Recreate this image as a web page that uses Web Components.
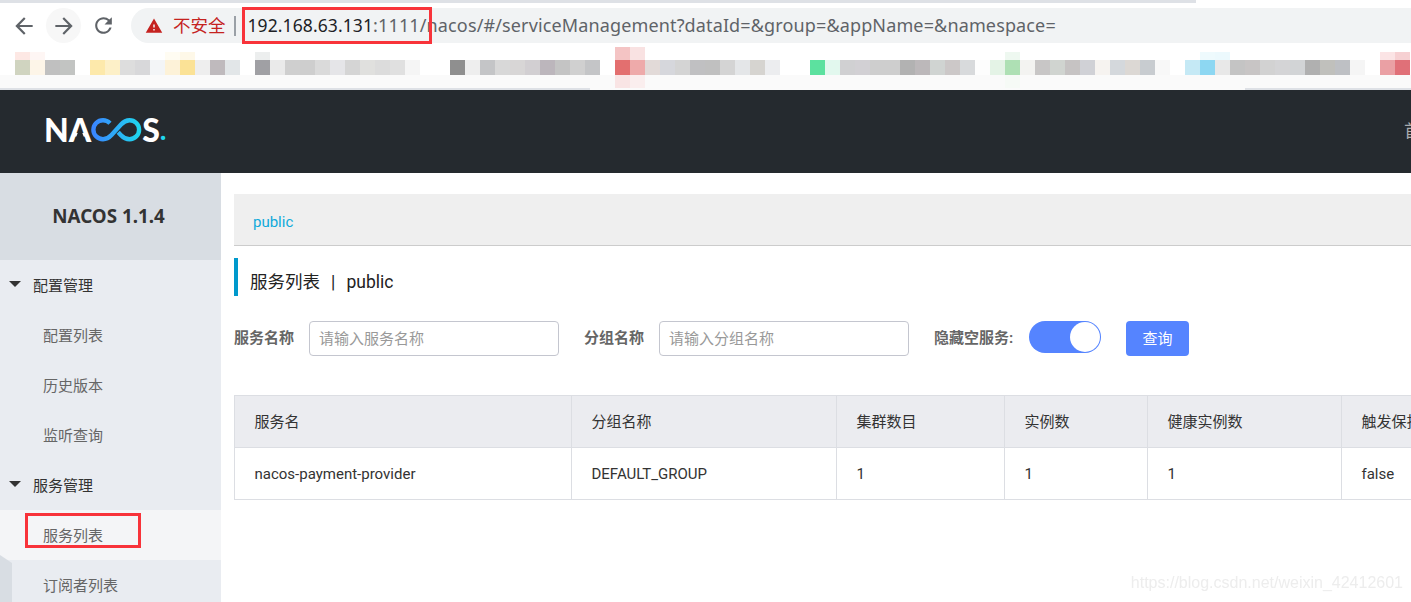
<!DOCTYPE html>
<html lang="zh"><head><meta charset="utf-8"><title>Nacos</title>
<style>
html,body{margin:0;padding:0;width:1411px;height:602px;overflow:hidden;background:#fff;font-family:"Noto Sans","Noto Sans CJK SC",sans-serif}
</style></head><body>
<browser-toolbar></browser-toolbar>
<bookmark-bar></bookmark-bar>
<nacos-header></nacos-header>
<app-shell>
  <side-nav slot="nav"></side-nav>
  <service-page slot="main"></service-page>
</app-shell>
<red-mark style="left:242px;top:7px;width:184px;height:31px"></red-mark>
<red-mark style="left:25px;top:513px;width:110px;height:29px"></red-mark>
<water-mark>https://blog.csdn.net/weixin_42412601</water-mark>
<script>
const FONT='"Noto Sans","Noto Sans CJK SC",sans-serif';
const RFONT='Roboto,"Noto Sans CJK SC",sans-serif';
function def(name,html){customElements.define(name,class extends HTMLElement{constructor(){super();this.attachShadow({mode:'open'}).innerHTML=html;}});}

def('browser-toolbar',`<style>
:host{display:block;height:47px;background:#fff;font-family:${FONT}}
.strip{height:3px;width:1196px;background:#dee1e6}
.row{display:flex;align-items:center;height:35px;margin-top:5px;padding-left:6px;gap:5px}
.btn{width:35px;height:35px;border-radius:50%;display:flex;align-items:center;justify-content:center}
.btn.hover{background:#f7f7f7}
svg{display:block;fill:#5f6368}
.pill{flex:1;margin-left:5px;height:35px;background:#f1f3f4;border-radius:18px 0 0 18px;display:flex;align-items:center;padding-left:14px;white-space:nowrap;overflow:hidden}
.warn{fill:#c5221f;margin-right:10px}
.insecure{color:#c5221f;font-size:17.5px;margin-bottom:2px}
.sep{width:2px;height:20px;background:#9aa0a6;margin:0 12px 0 8px}
.url{font-size:18px;letter-spacing:.135px;color:#5f6368;margin-bottom:2px}
.host{color:#202124;font-size:17.5px;letter-spacing:.1px}
</style>
<div class="strip"></div>
<div class="row">
<div class="btn"><svg width="26" height="26" viewBox="0 0 24 24"><path d="M20 11H7.83l5.59-5.59L12 4l-8 8 8 8 1.41-1.41L7.83 13H20v-2z"/></svg></div>
<div class="btn hover"><svg width="26" height="26" viewBox="0 0 24 24"><path d="M4 11h12.17l-5.59-5.59L12 4l8 8-8 8-1.41-1.41L16.17 13H4v-2z"/></svg></div>
<div class="btn"><svg width="25" height="25" viewBox="0 0 24 24"><path d="M17.65 6.35A7.95 7.95 0 0 0 12 4c-4.42 0-7.99 3.58-7.99 8s3.57 8 7.99 8c3.73 0 6.84-2.55 7.73-6h-2.08A5.99 5.99 0 0 1 12 18c-3.31 0-6-2.69-6-6s2.69-6 6-6c1.66 0 3.14.69 4.22 1.78L13 11h7V4l-2.35 2.35z"/></svg></div>
<div class="pill"><svg class="warn" width="18" height="18" viewBox="0 0 24 24"><path d="M1 21h22L12 2 1 21zm12-3h-2v-2h2v2zm0-4h-2v-4h2v4z"/></svg><span class="insecure">不安全</span><span class="sep"></span><span class="url"><span class="host">192.168.63.131</span>:1111/nacos/#/serviceManagement?dataId=&amp;group=&amp;appName=&amp;namespace=</span></div>
</div>`);

class BookmarkBar extends HTMLElement{constructor(){super();
const mid='d0d4c0 fdf5e8 c0c0c0 c2c4c2 fff fde9ab fdf0c8 ddd d8d8da f3f5f7 fdf2d8 fbe296 eee bfbabd e2e6e8 fff a0a0a4 eaeaea cfcfcf cecece dadada e5e5e8 d5d5d5 e0e0de dcdcdc e0e0e0 f5f5f5 fff fff 8f8f8f eee c4c5c7 d8d8d8 d8d6d6 d2cfd2 bcb6bc c4c4c4 d0d0d0 c4c5c7 fff e36f6f eeaaaa e2dad8 d6d7dc d4d4d4 c0c0c2 c0c0c0 d4d4d4 e4e6e8 d6d4d0 ecedef fff fff 5ce19f e2f8ee d0d0d2 d2d0d4 cecece cecece b2b2b2 bcb8ba d0d4d2 ccc8c8 d8dadc fdfdfd e4f3e6 aee0b4 f3f3f1 c8c6c6 d0d4d0 c6c3c3 d0d1d6 f6f3f0 d4d8dc dcd8d4 c8ccd0 f8f8f8 fff c5e9f5 8dd7f2 e8e8e8 c4c4c4 c8c5c5 d2d2d2 d4d4d6 d2d4d6 b0b0b0 c0c0bc bec0c4 f5f5f5 fff eaa0a4 e07078'.split(' ');
const top={0:'fde8e4',1:'fef6f4',10:'fffcf2',11:'fef8e8',16:'eceeee',40:'f4c4c4',41:'f9e2e2',66:'eef8f0',79:'eefafd',80:'ecf9fd',91:'fbe4e5',92:'f6d0d2'};
const bot={40:'f9e4e4',41:'faeeee',66:'f6faf6'};
const cells=mid.map((c,i)=>{const t=top[i];const st=t?`linear-gradient(transparent ${i==40||i==41?0:5}px,#${t} 0)`:'none';
return `<div class="c"><i style="background:${st}"></i><b style="background:#${c}"></b><u style="background:${bot[i]?'#'+bot[i]:'transparent'}"></u></div>`}).join('');
this.attachShadow({mode:'open'}).innerHTML=`<style>
:host{display:flex;height:43px;padding-left:15px;box-sizing:border-box;overflow:hidden;
background:linear-gradient(#dee1e6,#dee1e6) 0 100%/590px 2px no-repeat,linear-gradient(#dee1e6,#dee1e6) 100% 100%/166px 2px no-repeat,linear-gradient(#fff 28px,#fafafa 28px)}
.c{width:15px;flex:none;display:flex;flex-direction:column}
i{display:block;height:13px}b{display:block;height:15px}u{display:block;height:13px}
</style>${cells}`;}}
customElements.define('bookmark-bar',BookmarkBar);

def('nacos-header',`<style>
:host{display:flex;align-items:center;justify-content:space-between;height:83px;background:#252a2f;padding-left:44px;overflow:hidden}
.logo{display:flex;align-items:center;height:24px;color:#fff;font:900 32px/24px Lato,sans-serif;margin-top:-4px}
.a{position:relative;display:block}
.a::after{content:"";position:absolute;inset:0;background:#252a2f;clip-path:polygon(50% 38%,74% 100%,26% 100%)}
.logo svg{display:block;flex:none}
.s{margin-left:-2px}
.dot{color:#1fd6ee;font-size:26px}
.nav{width:7px;overflow:hidden;white-space:nowrap;color:#a9abad;font-size:17.5px;font-family:${FONT};margin-top:-4px}
</style>
<div class="logo"><span>N</span><span class="a">A</span><svg width="53" height="24" viewBox="0 0 53 24" fill="none"><defs><linearGradient id="g" x1="0" x2="1" y1="0" y2="0"><stop offset="0" stop-color="#3a86ff"/><stop offset="1" stop-color="#1fd6ee"/></linearGradient></defs><path d="M19 5.200C17 3.200 15 2.200 12 2.200 6.700 2.200 2.400 6.400 2.400 11.700 2.400 17 6.700 21.200 12 21.200c3.500 0 6-1.500 8.500-4.200L30 6.500C32.500 3.800 35 2.200 38.500 2.200c5.300 0 9.600 4.200 9.600 9.500s-4.300 9.500-9.600 9.500c-3.500 0-6-1.300-8.500-4l-2.800-3" stroke="url(#g)" stroke-width="4.400"/></svg><span class="s">S</span><span class="dot">.</span></div>
<div class="nav">首页</div>`);

def('app-shell',`<style>:host{display:flex;height:429px;overflow:hidden}
.n{flex:none;width:221px}.m{flex:1;min-width:0}</style>
<div class="n"><slot name="nav"></slot></div><div class="m"><slot name="main"></slot></div>`);

def('nav-group',`<style>
:host{display:flex;align-items:center;height:50px;color:#333;font-size:15px;padding:0 0 2px 9px;box-sizing:border-box}
.t{width:0;height:0;border-left:6px solid transparent;border-right:6px solid transparent;border-top:6px solid #333;margin:-1px 12px 0 0}
</style><span class="t"></span><slot></slot>`);
def('nav-item',`<style>
:host{display:flex;align-items:center;height:50px;color:#666;font-size:15px;padding:0 0 2px 43px;box-sizing:border-box}
:host([active]){background:#f4f5f7}
</style><slot></slot>`);
def('side-nav',`<style>
:host{display:block;height:429px;background:#e9ecf1;position:relative;overflow:hidden;font-family:${FONT}}
.title{height:87px;background:#d8dde3;display:flex;align-items:center;justify-content:center;font-size:18.8px;font-weight:700;color:#333;padding:0 4px 1px 0;box-sizing:border-box}
.handle{position:absolute;left:0;top:382px;width:12px;height:47px;background:#d8dde3;clip-path:polygon(0 0,100% 8px,100% 100%,0 100%)}
</style>
<div class="title">NACOS 1.1.4</div>
<nav-group>配置管理</nav-group><nav-item>配置列表</nav-item><nav-item>历史版本</nav-item><nav-item>监听查询</nav-item>
<nav-group>服务管理</nav-group><nav-item active>服务列表</nav-item><nav-item>订阅者列表</nav-item>
<div class="handle"></div>`);

def('field-input',`<style>
:host{display:flex;align-items:center;width:250px;height:35px;box-sizing:border-box;border:1px solid #c4c6cf;border-radius:4px;padding:0 0 2px 9px;color:#999;font-size:15px;background:#fff}
</style><slot></slot>`);
def('toggle-switch',`<style>
:host{display:flex;justify-content:flex-end;align-items:center;width:72px;height:32px;box-sizing:border-box;background:#5584ff;border-radius:16px;padding-right:1px}
i{display:block;width:30px;height:30px;border-radius:50%;background:#fff}
</style><i></i>`);
def('query-button',`<style>
:host{display:flex;align-items:center;justify-content:center;width:63px;height:35px;box-sizing:border-box;padding-bottom:2px;background:#5584ff;color:#fff;border-radius:4px;font-size:15px}
</style><slot></slot>`);
def('data-table',`<style>
:host{display:grid;grid-template-columns:337px 265px 168px 143px 194px 200px;width:1177px;box-sizing:border-box;margin-top:39px;border-top:1px solid #dcdee3;border-left:1px solid #dcdee3;font-size:15px;color:#333}
</style><slot></slot>`);
def('table-cell',`<style>
:host{display:flex;align-items:center;height:52px;box-sizing:border-box;padding:0 0 0 19.5px;border-right:1px solid #dcdee3;border-bottom:1px solid #dcdee3;white-space:nowrap;overflow:hidden}
:host([head]){background:#ebecf0;color:#333;padding-bottom:2px}
</style><slot></slot>`);
def('service-page',`<style>
:host{display:block;height:429px;padding:21px 0 0 13px;box-sizing:border-box;overflow:hidden;font-family:${RFONT};background:#fff}
.ns{height:52px;box-sizing:border-box;background:#efefef;border-bottom:1px solid #ccc;display:flex;align-items:center;padding:4px 0 0 19px;color:#10aadb;font-size:15px}
.title{margin-top:12px;height:38px;box-sizing:border-box;border-left:4px solid #09c;padding:7px 0 0 12px;display:flex;align-items:center;font-size:17.5px;color:#222;white-space:pre;word-spacing:1.200px}
.form{display:flex;margin-top:25px;height:35px;font-size:15px}
.l{font-weight:700;color:#666;line-height:35px;white-space:nowrap}
.form>*{flex:none}
</style>
<div class="ns">public</div>
<div class="title">服务列表  |  public</div>
<div class="form">
<span class="l" style="width:75px">服务名称</span><field-input>请输入服务名称</field-input>
<span class="l" style="width:75px;margin-left:25px">分组名称</span><field-input>请输入分组名称</field-input>
<span class="l" style="width:95px;margin-left:25px">隐藏空服务:</span><toggle-switch></toggle-switch>
<query-button style="margin-left:25px">查询</query-button>
</div>
<data-table>
<table-cell head>服务名</table-cell><table-cell head>分组名称</table-cell><table-cell head>集群数目</table-cell><table-cell head>实例数</table-cell><table-cell head>健康实例数</table-cell><table-cell head>触发保护阈值</table-cell>
<table-cell>nacos-payment-provider</table-cell><table-cell>DEFAULT_GROUP</table-cell><table-cell>1</table-cell><table-cell>1</table-cell><table-cell>1</table-cell><table-cell>false</table-cell>
</data-table>`);

def('red-mark',`<style>:host{position:absolute;display:block;border:3px solid #f8333a}</style>`);
def('water-mark',`<style>:host{position:absolute;right:8px;top:572px;font:16px/22px "Liberation Sans",sans-serif;color:#ededed;filter:blur(.4px);white-space:nowrap}</style><slot></slot>`);
</script>
</body></html>
